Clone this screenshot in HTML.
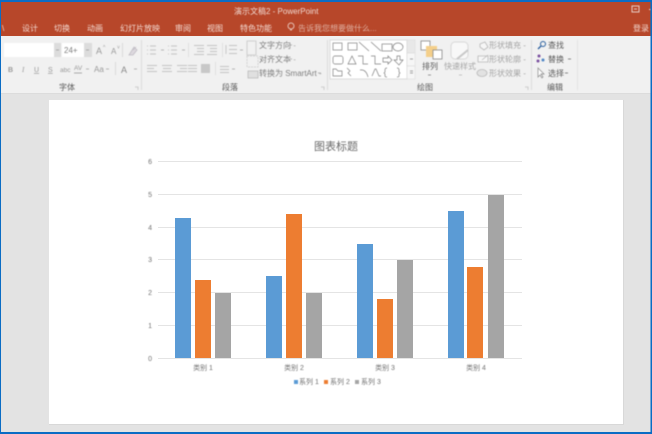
<!DOCTYPE html>
<html><head><meta charset="utf-8">
<style>
html,body{margin:0;padding:0;width:652px;height:434px;overflow:hidden;background:#e3e3e3}
svg{display:block}
text{font-family:"Liberation Sans","Noto Sans CJK SC",sans-serif}
.soft{filter:blur(.45px)}
.tab{font-size:8px;fill:#f3d9d0}
.r{font-size:8px;fill:#808080}
.l{font-size:8px;fill:#5a5a5a}
.d{font-size:8px;fill:#5a5a5a}
.ax{font-size:7px;fill:#707070}
</style></head><body>
<svg width="652" height="434" viewBox="0 0 652 434" xmlns="http://www.w3.org/2000/svg">
<rect width="652" height="434" fill="#e3e3e3"/>
<rect y="0" width="652" height="36" fill="#b7472a"/>
<rect y="36" width="652" height="57" fill="#f1f1f1"/>
<rect y="93" width="652" height="1" fill="#dcdcdc"/>

<rect x="49" y="100" width="574" height="324" fill="#fff"/>
<rect x="49" y="424" width="574" height="1" fill="#d8d8d8"/>
<rect x="623" y="100" width="1" height="325" fill="#d8d8d8"/>

<g class="soft">
<text x="234" y="14" style="font-size:8px;fill:#f0d8d0">演示文稿2 - PowerPoint</text>
<rect x="632" y="6" width="7" height="6" fill="none" stroke="#e8cfc8"/>
<path d="M634 9h3" stroke="#e8cfc8"/>
<rect x="649" y="9" width="2" height="1" fill="#e8cfc8"/>
<text x="2" y="31" class="tab">\</text>
<text x="22" y="31" class="tab">设计</text>
<text x="54" y="31" class="tab">切换</text>
<text x="87" y="31" class="tab">动画</text>
<text x="120" y="31" class="tab">幻灯片放映</text>
<text x="175" y="31" class="tab">审阅</text>
<text x="207" y="31" class="tab">视图</text>
<text x="240" y="31" class="tab">特色功能</text>
<circle cx="291" cy="26" r="3" fill="none" stroke="#e6bfb2"/>
<path d="M290 30h2" stroke="#e6bfb2"/>
<text x="298" y="31" style="font-size:8px;fill:#dfae9f">告诉我您想要做什么...</text>
<text x="633" y="31" class="tab">登录</text>

<!-- font group -->
<rect x="4" y="43" width="50" height="14" fill="#fff"/>
<rect x="54" y="43" width="7" height="14" fill="#dcdcdc"/>
<rect x="62" y="43" width="22" height="14" fill="#fff"/>
<rect x="84" y="43" width="8" height="14" fill="#dcdcdc"/>
<text x="64" y="53" class="r">24+</text>
<path d="M56 50h3M86 50h3" stroke="#aaa"/>
<text x="96" y="54" style="font-size:9px;fill:#999">A</text><text x="103" y="49" style="font-size:5px;fill:#999">^</text>
<text x="111" y="54" style="font-size:8px;fill:#999">A</text><text x="117" y="49" style="font-size:5px;fill:#999">˅</text>
<path d="M129 55l5-8 3 3-4 5zM133 50l3-3" stroke="#c0bcc4" fill="#dcd8de" stroke-width=".8"/>
<rect x="122" y="43" width="1" height="14" fill="#dcdcdc"/>
<text x="8" y="72" style="font-size:7px;font-weight:bold;fill:#999">B</text>
<text x="22" y="72" style="font-size:7px;font-style:italic;fill:#999;font-family:'Liberation Serif',serif">I</text>
<text x="34" y="72" style="font-size:7px;fill:#999;text-decoration:underline">U</text>
<text x="48" y="72" style="font-size:7px;fill:#999;text-decoration:underline">S</text>
<text x="60" y="72" style="font-size:6.5px;fill:#999">abc</text>
<text x="74" y="70" style="font-size:6.5px;fill:#999">AV</text><path d="M74 73h8" stroke="#999" stroke-width=".8"/>
<path d="M86 69h3M106 69h3M134 69h3M161 50h3M182 50h3M240 50h3M232 69h3M289 45h3M289 59h3M318 73h3" stroke="#b5b5b5"/>
<text x="94" y="72" style="font-size:8px;fill:#999">Aa</text>
<rect x="115" y="62" width="1" height="13" fill="#dcdcdc"/>
<text x="121" y="73" style="font-size:9px;fill:#888">A</text>
<text x="59" y="90" class="d">字体</text>
<path d="M135 87h3v3" fill="none" stroke="#c4c4c4" stroke-width=".8"/>
<rect x="141" y="40" width="1" height="50" fill="#dedede"/>

<!-- paragraph -->
<g stroke="#b8b8b8" stroke-width=".7" fill="none">
<path d="M147 46h1M147 50h1M147 54h1M150 46h6M150 50h6M150 54h6M168 46h1M168 50h1M168 54h1M171 46h6M171 50h6M171 54h6"/>
<path d="M194 45.500h10M197 48.500h7M197 51.500h7M194 54.500h10M207 45.500h10M210 48.500h7M210 51.500h7M207 54.500h10"/>
<path d="M229 45.500h8M229 49.500h8M229 53.500h8M226 45v9"/>
<path d="M147 65.500h10M147 68.500h7M147 71.500h10M162 65.500h10M163 68.500h8M162 71.500h10M177 65.500h10M180 68.500h7M177 71.500h10M188 65.500h9M188 68.500h9M188 71.500h9"/>
<path d="M220 66.500h9M220 69.500h9M220 72.500h9"/>
</g>
<rect x="201" y="64" width="9" height="9" fill="#c8c8c8"/>
<path d="M188.500 43v14M222.500 43v14M215.500 62v13" stroke="#e0e0e0"/>
<rect x="247" y="41" width="9" height="14" fill="none" stroke="#c8c8c8" stroke-width=".8"/>
<rect x="247" y="56" width="11" height="11" fill="none" stroke="#cccccc" stroke-dasharray="2 1" stroke-width=".8"/>
<rect x="248" y="71" width="10" height="7" fill="#e0e0e0" stroke="#b5b5b5" stroke-width=".7"/>
<text x="259" y="48" class="r">文字方向 <tspan fill="#aaa">-</tspan></text>
<text x="259" y="62" class="r">对齐文本 <tspan fill="#aaa">-</tspan></text>
<text x="259" y="76" class="r">转换为 SmartArt <tspan fill="#aaa">-</tspan></text>
<text x="222" y="90" class="d">段落</text>
<path d="M321 87h3v3" fill="none" stroke="#c4c4c4" stroke-width=".8"/>
<rect x="327" y="40" width="1" height="50" fill="#dedede"/>

<!-- shapes -->
<rect x="330" y="40" width="77" height="39" fill="#fff" stroke="#d5d5d5" stroke-width=".8"/>
<rect x="407" y="40" width="8" height="13" fill="#e8e8e8" stroke="#d8d8d8" stroke-width=".5"/>
<rect x="407" y="53" width="8" height="13" fill="#f6f6f6" stroke="#d8d8d8" stroke-width=".5"/>
<rect x="407" y="66" width="8" height="13" fill="#f6f6f6" stroke="#d8d8d8" stroke-width=".5"/>
<path d="M410 59h3M410 71h3M410 73h3" stroke="#888" stroke-width=".8"/>
<g fill="none" stroke="#808080" stroke-width=".7">
<rect x="333" y="43" width="9" height="7"/><rect x="348" y="43" width="9" height="7"/>
<path d="M359 42l10 9M371 42l10 9"/>
<rect x="382" y="44" width="10" height="7"/><ellipse cx="398" cy="47" rx="5" ry="4"/>
<rect x="333" y="56" width="10" height="8" rx="2"/><path d="M348 64l4-8 4 8zM358 56h5v8h5M371 56h4v8h6"/>
<path d="M383 58h5v-2l4 4-4 4v-2h-5zM397 56h3v4h3l-4 5-5-5h3z"/>
<path d="M333 76v-7h3l2 2h4v5zM347 68l3 3-2 2 3 3M360 70q6-1 8 7M372 76l3-7h1l3 7h2"/>
<path d="M387 68q-2 0-2 2v2l-1 1 1 1v2q0 1 2 1M397 68q2 0 2 2v2l1 1-1 1v2q0 1-2 1"/>
</g>
<rect x="421" y="41" width="9" height="9" fill="#fff" stroke="#888" stroke-width=".8"/>
<rect x="426" y="46" width="11" height="11" fill="#f4cf8a"/>
<rect x="433" y="50" width="9" height="9" fill="#fff" stroke="#888" stroke-width=".8"/>
<text x="422" y="69" style="font-size:8px;fill:#5a5a5a">排列</text>
<path d="M428 75h3" stroke="#999"/>
<rect x="451" y="42" width="17" height="17" rx="4" fill="#f8f8f8" stroke="#d8d8d8"/>
<path d="M457 59l11-9" stroke="#c8c8c8" stroke-width="2"/>
<text x="444" y="69" style="font-size:8px;fill:#a5a5a5">快速样式</text>
<path d="M459 75h3" stroke="#c4c4c4"/>
<path d="M480 44l5-2 3 5-4 3-4-3z" fill="#f6f6f6" stroke="#b8b8b8" stroke-width=".8"/>
<path d="M478 62v-6h10v6zM482 60l6-5" fill="#f6f6f6" stroke="#b8b8b8" stroke-width=".8"/>
<ellipse cx="482" cy="73" rx="5" ry="3.500" fill="#e2e2e2" stroke="#b8b8b8" stroke-width=".8"/>
<text x="489" y="48" style="font-size:8px;fill:#a5a5a5">形状填充 -</text>
<text x="489" y="62" style="font-size:8px;fill:#a5a5a5">形状轮廓 -</text>
<text x="489" y="76" style="font-size:8px;fill:#a5a5a5">形状效果 -</text>
<text x="417" y="90" class="d">绘图</text>
<path d="M525 87h3v3" fill="none" stroke="#c4c4c4" stroke-width=".8"/>
<rect x="531" y="40" width="1" height="50" fill="#dedede"/>
<circle cx="543" cy="44" r="2.500" fill="none" stroke="#2a5f9e" stroke-width="1"/>
<path d="M541 46l-3 3" stroke="#2a5f9e" stroke-width="1.300"/>
<text x="548" y="48" class="l">查找</text>
<circle cx="539" cy="56" r="1.500" fill="#7a4fa0"/><circle cx="543" cy="60" r="1.500" fill="#4f86c6"/><circle cx="538" cy="61" r="1.500" fill="#7a4fa0"/>
<text x="548" y="62" class="l">替换</text>
<path d="M568 59h3M565 73h3" stroke="#888"/>
<path d="M538 68v9l2-2 2 3 1-1-2-3h3z" fill="#fff" stroke="#888" stroke-width=".7"/>
<text x="548" y="76" class="l">选择</text>
<text x="547" y="90" class="d">编辑</text>
<rect x="577" y="40" width="1" height="50" fill="#e4e4e4"/>
</g>

<!-- chart -->
<g fill="#e4e4e4">
<rect x="158" y="161" width="364" height="1"/>
<rect x="158" y="194" width="364" height="1"/>
<rect x="158" y="227" width="364" height="1"/>
<rect x="158" y="259" width="364" height="1"/>
<rect x="158" y="292" width="364" height="1"/>
<rect x="158" y="325" width="364" height="1"/>
<rect x="158" y="358" width="364" height="1"/>
</g>
<g fill="#5b9bd5">
<rect x="175" y="218" width="16" height="140"/>
<rect x="266" y="276" width="16" height="82"/>
<rect x="357" y="244" width="16" height="114"/>
<rect x="448" y="211" width="16" height="147"/>
</g>
<g fill="#ed7d31">
<rect x="195" y="280" width="16" height="78"/>
<rect x="286" y="214" width="16" height="144"/>
<rect x="377" y="299" width="16" height="59"/>
<rect x="467" y="267" width="16" height="91"/>
</g>
<g fill="#a5a5a5">
<rect x="215" y="293" width="16" height="65"/>
<rect x="306" y="293" width="16" height="65"/>
<rect x="397" y="260" width="16" height="98"/>
<rect x="488" y="195" width="16" height="163"/>
</g>
<g class="soft">
<text x="336" y="150" text-anchor="middle" style="font-size:11px;fill:#6a6a6a">图表标题</text>
<g class="ax" text-anchor="end">
<text x="152" y="164">6</text><text x="152" y="197">5</text><text x="152" y="230">4</text>
<text x="152" y="262">3</text><text x="152" y="295">2</text><text x="152" y="328">1</text><text x="152" y="361">0</text>
</g>
<g class="ax" text-anchor="middle">
<text x="203" y="370">类别 1</text><text x="294" y="370">类别 2</text>
<text x="385" y="370">类别 3</text><text x="476" y="370">类别 4</text>
</g>
<rect x="294" y="380" width="4" height="4" fill="#5b9bd5"/>
<rect x="324" y="380" width="4" height="4" fill="#ed7d31"/>
<rect x="355" y="380" width="4" height="4" fill="#a5a5a5"/>
<g class="ax">
<text x="299" y="384">系列 1</text><text x="330" y="384">系列 2</text><text x="361" y="384">系列 3</text>
</g>
</g>

<!-- blue window border -->
<rect x="0" y="0" width="652" height="2" fill="#0a6cc4"/>
<rect x="0" y="432" width="652" height="2" fill="#0a6cc4"/>
<rect x="0" y="0" width="1" height="434" fill="#0a6cc4"/>
<rect x="650.500" y="0" width="1.500" height="434" fill="#0a6cc4"/>
</svg>
</body></html>
